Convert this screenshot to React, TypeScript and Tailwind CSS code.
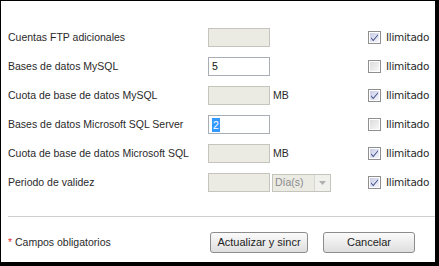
import React from 'react';

type Row = {
  label: string;
  value?: string;
  disabled: boolean;
  unit?: 'MB' | 'select';
  checked: boolean;
  selected?: boolean;
};

const rows: Row[] = [
  { label: 'Cuentas FTP adicionales', disabled: true, checked: true },
  { label: 'Bases de datos MySQL', value: '5', disabled: false, checked: false },
  { label: 'Cuota de base de datos MySQL', disabled: true, unit: 'MB', checked: true },
  { label: 'Bases de datos Microsoft SQL Server', value: '2', disabled: false, checked: false, selected: true },
  { label: 'Cuota de base de datos Microsoft SQL', disabled: true, unit: 'MB', checked: true },
  { label: 'Periodo de validez', disabled: true, unit: 'select', checked: true },
];

const Checkbox: React.FC<{ checked: boolean }> = ({ checked }) => (
  <svg width="13" height="13" viewBox="0 0 13 13" className="shrink-0">
    <defs>
      <linearGradient id={checked ? 'cbOn' : 'cbOff'} x1="0" y1="0" x2="1" y2="1">
        <stop offset="0" stopColor={checked ? '#c9cde6' : '#dcdcdc'} />
        <stop offset="1" stopColor={checked ? '#f4f5fb' : '#f7f7f7'} />
      </linearGradient>
    </defs>
    <rect x="0.5" y="0.5" width="12" height="12" fill="#fff" stroke="#8f8f8f" />
    <rect x="2" y="2" width="9" height="9" fill={`url(#${checked ? 'cbOn' : 'cbOff'})`} />
    {checked && (
      <path d="M3 6.2 L5.2 8.8 L10 3.2 L10 4.6 L5.2 10.2 L3 7.6 Z" fill="#3d4a86" />
    )}
  </svg>
);

const Field: React.FC<{ row: Row }> = ({ row }) => {
  if (row.disabled) {
    return <div className="w-[62px] h-[19px] bg-[#ebebe4] border border-[#c5c5bd]" />;
  }
  return (
    <div className="w-[62px] h-[19px] bg-white border border-[#a9aeb6] flex items-center pl-[3px]">
      {row.selected ? (
        <span className="bg-[#3399ff] text-white leading-[14px] px-px">{row.value}</span>
      ) : (
        <span className="text-[#111]">{row.value}</span>
      )}
    </div>
  );
};

const DaySelect: React.FC = () => (
  <div className="ml-[2px] w-[59px] h-[18px] bg-[#ebebe4] border border-[#c5c5bd] flex items-center">
    <span className="flex-1 pl-[2px] text-[#8a8a8a]">Día(s)</span>
    <div className="w-[16px] h-full border-l border-[#d8d8d2] flex items-center justify-center bg-[#f0f0ec]">
      <svg width="7" height="4" viewBox="0 0 7 4">
        <path d="M0 0 L7 0 L3.5 4 Z" fill="#b0b0b0" />
      </svg>
    </div>
  </div>
);

export default function App() {
  return (
    <div
      className="w-[439px] h-[266px] bg-black pt-px pl-px pr-[4px] pb-[4px] text-[10.5px] text-[#2a2a2a]"
      style={{ fontFamily: '"Liberation Sans", Arial, sans-serif' }}
    >
      <div className="w-full h-full bg-white flex flex-col pt-[22px]">
        {rows.map((row) => (
          <div key={row.label} className="h-[29px] flex items-center">
            <span className="w-[207px] pl-[7px] shrink-0">{row.label}</span>
            <Field row={row} />
            <div className="w-[98px] flex items-center">
              {row.unit === 'MB' && <span className="ml-[3px]">MB</span>}
              {row.unit === 'select' && <DaySelect />}
            </div>
            <div className="flex items-center gap-[5px]">
              <Checkbox checked={row.checked} />
              <span style={{ fontFamily: '"DejaVu Sans", Verdana, sans-serif' }} className="text-[10.5px] tracking-[-0.3px]">
                Ilimitado
              </span>
            </div>
          </div>
        ))}
        <div className="mt-[19px] ml-[7px] border-t border-[#cfcfcf]" />
        <div className="flex items-center mt-[15px]">
          <span className="w-[209px] pl-[7px] shrink-0">
            <span className="text-[#e03030]">*</span> Campos obligatorios
          </span>
          <button className="w-[98px] h-[21px] rounded-[3px] border border-[#8c8c8c] bg-gradient-to-b from-[#fbfbfb] to-[#dedede] text-[#222] text-[11px]">
            Actualizar y sincr
          </button>
          <button className="ml-[15px] w-[92px] h-[21px] rounded-[3px] border border-[#8c8c8c] bg-gradient-to-b from-[#fbfbfb] to-[#dedede] text-[#222] text-[11px]">
            Cancelar
          </button>
        </div>
      </div>
    </div>
  );
}
